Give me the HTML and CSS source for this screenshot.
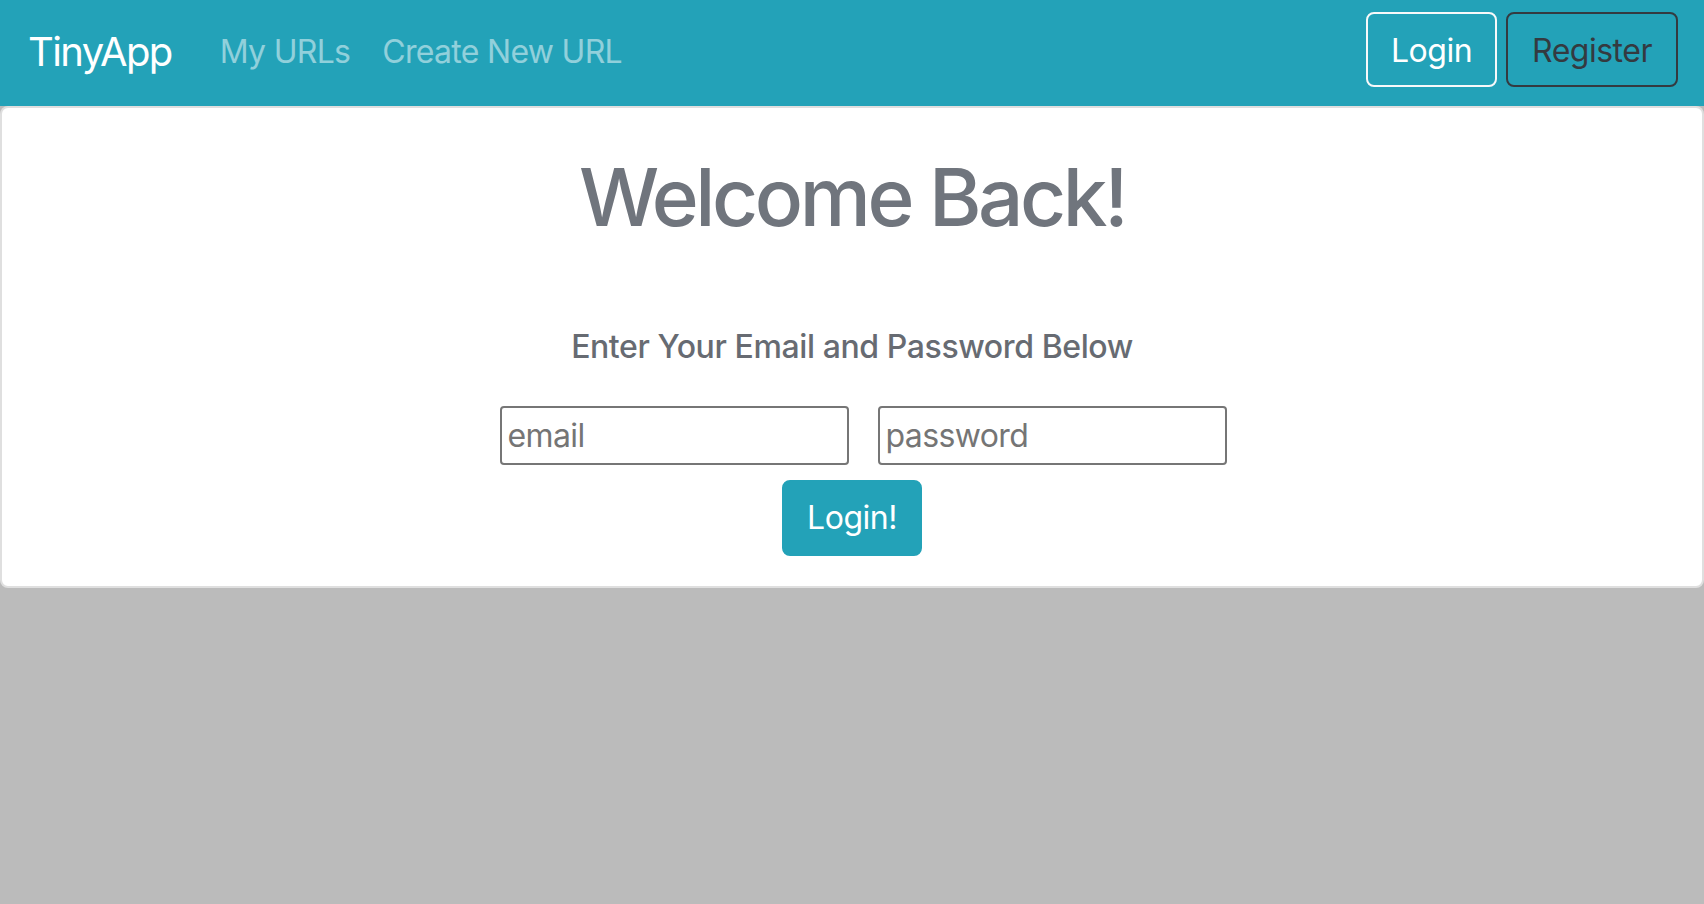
FILE: index.html
```html
<!DOCTYPE html>
<html lang="en">
<head>
<meta charset="utf-8">
<title>TinyApp - Login</title>
<link rel="stylesheet" href="styles.css">
</head>
<body>
<nav class="navbar">
  <a class="brand" href="#">TinyApp</a>
  <div class="nav-links">
    <a class="nav-link" href="#">My URLs</a>
    <a class="nav-link" href="#">Create New URL</a>
  </div>
  <div class="nav-actions">
    <button class="btn btn-outline-light">Login</button>
    <button class="btn btn-outline-dark">Register</button>
  </div>
</nav>
<main class="card">
  <h1 class="title">Welcome Back!</h1>
  <h5 class="subtitle">Enter Your Email and Password Below</h5>
  <form class="login-form">
    <div class="fields">
      <input class="field" type="text" placeholder="email">
      <input class="field" type="password" placeholder="password">
    </div>
    <button class="btn btn-info" type="button">Login!</button>
  </form>
</main>
</body>
</html>
```

FILE: styles.css
```css
* {
  box-sizing: border-box;
}

html, body {
  margin: 0;
  padding: 0;
}

body {
  background: #bbbbbb;
  font-family: Inter, "Noto Sans", "Liberation Sans", sans-serif;
  font-size: 32px;
  line-height: 1.5;
  color: #212529;
}

.navbar {
  display: flex;
  align-items: center;
  height: 106px;
  padding: 0 26px 2px 28px;
  background: #23a2b8;
}

.brand {
  font-size: 40px;
  line-height: 60px;
  color: #fff;
  text-decoration: none;
  margin-right: 32px;
  letter-spacing: -1.6px;
}

.nav-links {
  display: flex;
  flex: 1;
}

.nav-link {
  padding: 0 16px;
  color: rgba(255, 255, 255, 0.5);
  text-decoration: none;
  letter-spacing: -0.7px;
}

.nav-actions {
  display: flex;
  gap: 9px;
  margin-bottom: 5px;
}

.btn {
  font-family: inherit;
  font-size: 32px;
  line-height: 48px;
  padding: 12px 24px;
  border: 2px solid transparent;
  border-radius: 8px;
  background: transparent;
  cursor: pointer;
  letter-spacing: -0.5px;
}

.btn-outline-light {
  width: 131px;
  height: 75px;
  padding: 3px 0 0;
  color: #fff;
  border-color: #f8f9fa;
}

.btn-outline-dark {
  width: 172px;
  height: 75px;
  padding: 3px 0 0;
  color: #343a40;
  border-color: #343a40;
}

.card {
  display: flex;
  flex-direction: column;
  align-items: center;
  background: #fff;
  border: 2px solid rgba(0, 0, 0, 0.125);
  border-radius: 8px;
  padding: 41px 40px 30px;
}

.title {
  margin: 0 0 83px;
  font-size: 80px;
  line-height: 96px;
  font-weight: 500;
  color: #70757d;
  letter-spacing: -3.4px;
}

.subtitle {
  margin: 0 0 40px;
  font-size: 32px;
  line-height: 38px;
  font-weight: 500;
  color: #676b72;
  letter-spacing: -0.4px;
}

.login-form {
  display: flex;
  flex-direction: column;
  align-items: center;
  gap: 15px;
}

.fields {
  display: flex;
  gap: 29px;
  padding-left: 22px;
}

.field {
  width: 349px;
  height: 59px;
  padding: 0 4px 0 6px;
  font-family: inherit;
  font-size: 32px;
  border: 2px solid #767676;
  border-radius: 4px;
  color: #212529;
  letter-spacing: -0.6px;
}

.field::placeholder {
  color: #757575;
}

.btn-info {
  width: 140px;
  height: 76px;
  padding: 0;
  color: #fff;
  background: #23a2b8;
  border-color: #23a2b8;
}
```
